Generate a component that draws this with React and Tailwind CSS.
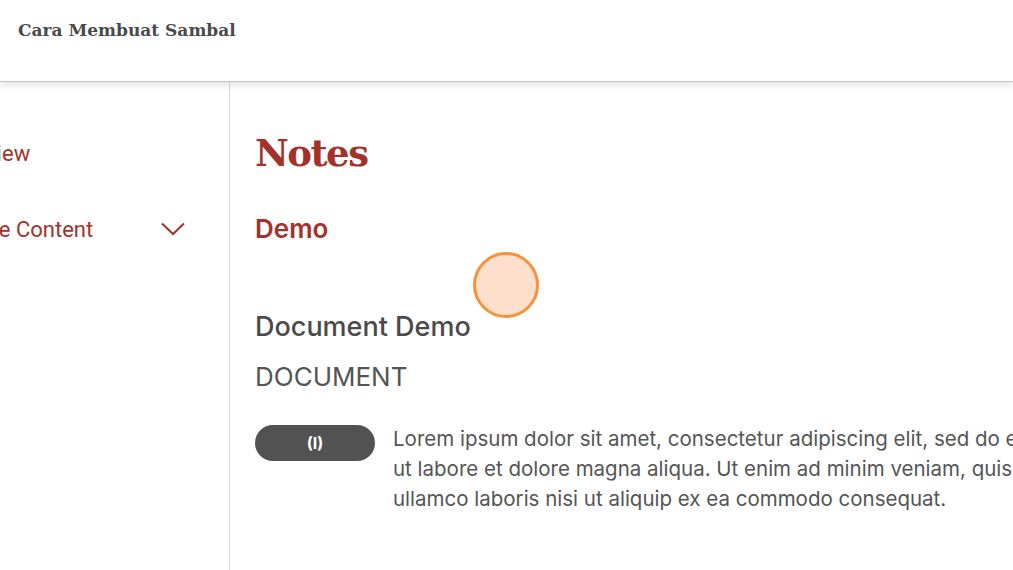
import React from 'react';

const sans = "font-['Inter','Roboto','Liberation_Sans',sans-serif]";
const slab = "font-['DejaVu_Serif','Liberation_Serif',serif]";

// --- Sidebar ---
const Sidebar = () => (
  <aside className="w-[230px] shrink-0 border-r border-[#dcdcdc] overflow-hidden">
    <nav className="-ml-[59px] pt-[51px] text-[22px] text-[#a3322a] font-['Roboto','Liberation_Sans',sans-serif]">
      <div className="h-[40px] flex items-center">Overview</div>
      <div className="mt-[36px] h-[40px] flex items-center justify-between pr-[44px]">
        <span>Course Content</span>
        <svg width="24" height="14" viewBox="0 0 24 14" fill="none" stroke="#a3322a" strokeWidth="2">
          <path d="M1 1.5 L12 12 L23 1.5" />
        </svg>
      </div>
    </nav>
  </aside>
);

// --- Main content ---
const Notes = () => (
  <main className={`relative flex-1 pl-[25px] pt-[48px] ${sans}`}>
    <h1 className={`text-[37px] leading-[46px] font-bold tracking-[-1.5px] text-[#a3322a] ${slab}`}>Notes</h1>
    <h2 className="mt-[37px] text-[26px] leading-[32px] font-semibold text-[#a3322a]">Demo</h2>

    <h3 className="mt-[66px] text-[27px] leading-[32px] font-medium text-[#4a4a4a]">Document Demo</h3>
    <div className="mt-[18px] text-[26px] leading-[32px] text-[#555]">DOCUMENT</div>

    <div className="mt-[31px] flex items-start gap-[18px]">
      <span className="mt-[1px] w-[120px] h-[36px] shrink-0 rounded-full bg-[#525252] text-white text-[16px] font-bold flex items-center justify-center">
        (I)
      </span>
      <p className="text-[20.5px] leading-[30px] text-[#555] whitespace-nowrap">
        Lorem ipsum dolor sit amet, consectetur adipiscing elit, sed do eiusmod tempor incididunt<br />
        ut labore et dolore magna aliqua. Ut enim ad minim veniam, quis nostrud exercitation<br />
        ullamco laboris nisi ut aliquip ex ea commodo consequat.
      </p>
    </div>

    {/* click indicator */}
    <div className="absolute left-[243px] top-[170px] w-[66px] h-[66px] rounded-full border-[3px] border-[#f7913a] bg-[#fddcc5]/90" />
  </main>
);

export default function App() {
  return (
    <div className="w-[1013px] h-[570px] overflow-hidden bg-white flex flex-col">
      <header className="h-[82px] shrink-0 bg-white border-b border-[#c4c4c4] shadow-[0_3px_8px_rgba(0,0,0,0.12)] relative z-10 flex items-start pl-[18px] pt-[18px]">
        <span className={`text-[17px] leading-[24px] font-bold text-[#4a4a4a] ${slab}`}>Cara Membuat Sambal</span>
      </header>
      <div className="flex flex-1 overflow-hidden">
        <Sidebar />
        <Notes />
      </div>
    </div>
  );
}
